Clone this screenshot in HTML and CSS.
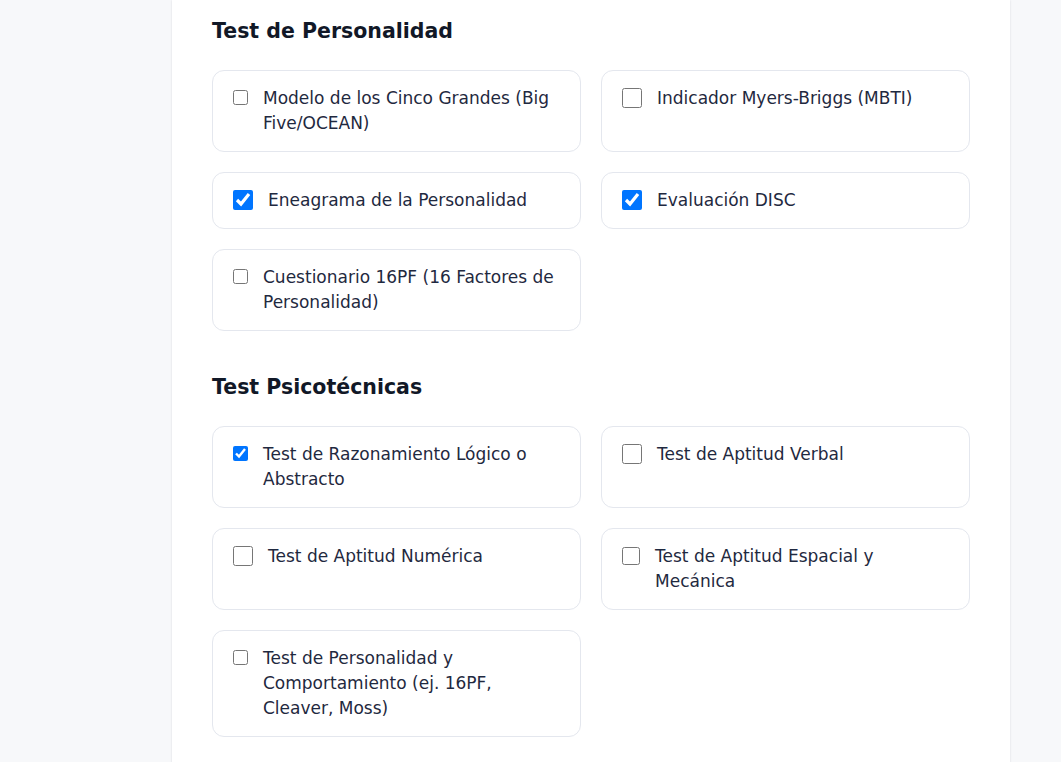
FILE: index.html
```html
<!DOCTYPE html>
<html lang="es">

<head>
    <meta name="viewport" content="width=device-width, initial-scale=1">
    <meta http-equiv="Content-Type" content="text/html; charset=UTF-8" />
    <title>Selección de pruebas</title>
    <link rel="stylesheet" href="styles.css">
</head>

<body>
    <div class="page">
        <div class="panel">
            <div class="section">
                <h2>Test de Personalidad</h2>
                <div class="options">
                    <label class="option">
                        <input type="checkbox" class="box-sm">
                        <span>Modelo de los Cinco Grandes (Big Five/OCEAN)</span>
                    </label>
                    <label class="option">
                        <input type="checkbox" class="box-lg">
                        <span>Indicador Myers-Briggs (MBTI)</span>
                    </label>
                    <label class="option">
                        <input type="checkbox" class="box-lg" checked>
                        <span>Eneagrama de la Personalidad</span>
                    </label>
                    <label class="option">
                        <input type="checkbox" class="box-lg" checked>
                        <span>Evaluación DISC</span>
                    </label>
                    <label class="option">
                        <input type="checkbox" class="box-sm">
                        <span>Cuestionario 16PF (16 Factores de Personalidad)</span>
                    </label>
                </div>
            </div>

            <div class="section">
                <h2>Test Psicotécnicas</h2>
                <div class="options">
                    <label class="option">
                        <input type="checkbox" class="box-sm" checked>
                        <span>Test de Razonamiento Lógico o Abstracto</span>
                    </label>
                    <label class="option">
                        <input type="checkbox" class="box-lg">
                        <span>Test de Aptitud Verbal</span>
                    </label>
                    <label class="option">
                        <input type="checkbox" class="box-lg">
                        <span>Test de Aptitud Numérica</span>
                    </label>
                    <label class="option">
                        <input type="checkbox" class="box-md">
                        <span>Test de Aptitud Espacial y Mecánica</span>
                    </label>
                    <label class="option">
                        <input type="checkbox" class="box-sm">
                        <span>Test de Personalidad y Comportamiento (ej. 16PF, Cleaver, Moss)</span>
                    </label>
                </div>
            </div>
        </div>
    </div>
</body>

</html>
```

FILE: styles.css
```css
body {
    margin: 0;
    background-color: #f7f8fa;
    font-family: "DejaVu Sans", "Open Sans", sans-serif;
    color: #1f2940;
}

.page {
    display: flex;
    padding-left: 172px;
    padding-right: 51px;
}

.panel {
    flex: 1;
    min-height: 100vh;
    background-color: #fff;
    padding: 17px 40px 40px;
    box-shadow: 0 0 2px rgba(15, 23, 42, 0.12);
}

.section + .section {
    margin-top: 42px;
}

h2 {
    margin: 0 0 25px;
    font-size: 20.5px;
    line-height: 28px;
    font-weight: 700;
    color: #111827;
}

.options {
    display: grid;
    grid-template-columns: 1fr 1fr;
    gap: 20px;
}

.option {
    display: flex;
    align-items: flex-start;
    gap: 15px;
    padding: 15px 24px 15px 20px;
    border: 1px solid #e4e7ee;
    border-radius: 12px;
    font-size: 17px;
    line-height: 25px;
    cursor: pointer;
}

.option input {
    flex: none;
    margin: 0;
    accent-color: #0075ff;
}

/* checkbox sizes differ per item in the design */
.box-lg {
    width: 20px;
    height: 20px;
    margin-top: 2px !important;
}

.box-md {
    width: 18px;
    height: 18px;
    margin-top: 3px !important;
}

.box-sm {
    width: 15px;
    height: 15px;
    margin-top: 4px !important;
}
```
